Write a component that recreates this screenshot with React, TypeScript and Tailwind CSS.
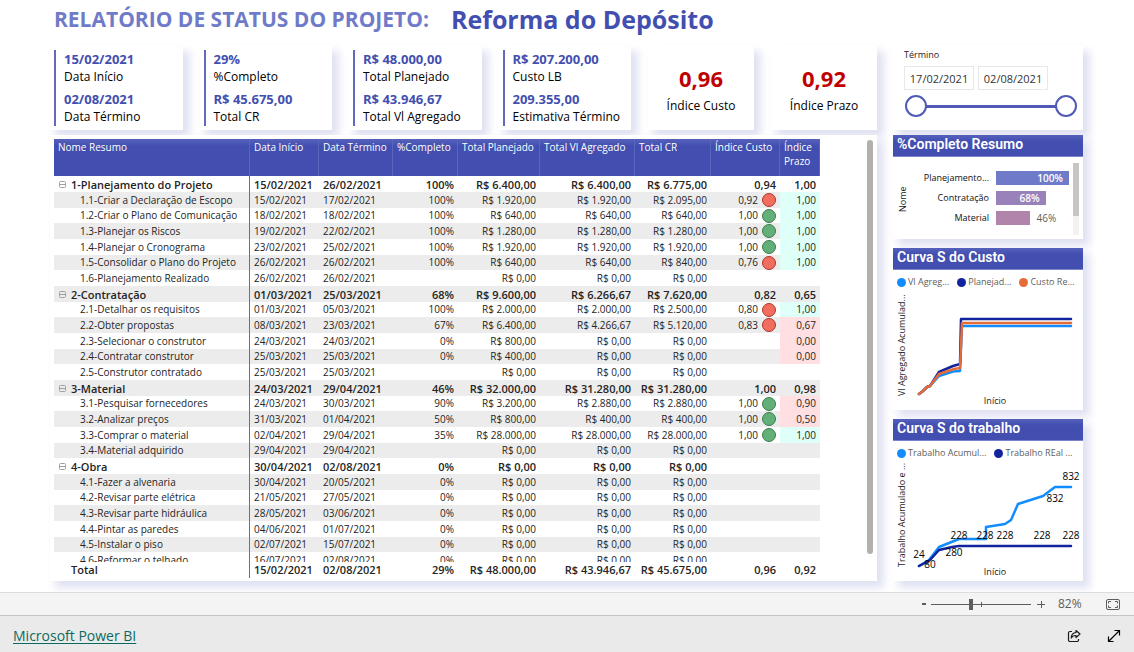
import React from 'react';
import clsx from 'clsx';

type Row = {
  name: string;
  group?: boolean;
  cells: string[];
  dot?: 'red' | 'green';
  tone?: 'good' | 'bad';
};

const columns = [
  { label: 'Nome Resumo', width: 'w-[196px]' },
  { label: 'Data Início', width: 'w-[69px]' },
  { label: 'Data Término', width: 'w-[74px]' },
  { label: '%Completo', width: 'w-[65px]' },
  { label: 'Total Planejado', width: 'w-[82px]' },
  { label: 'Total Vl Agregado', width: 'w-[95px]' },
  { label: 'Total CR', width: 'w-[76px]' },
  { label: 'Índice Custo', width: 'w-[69px]' },
  { label: 'Índice Prazo', width: 'w-[40px]' }
];

const rows: Row[] = [
  { name: '1-Planejamento do Projeto', group: true, cells: ['15/02/2021', '26/02/2021', '100%', 'R$ 6.400,00', 'R$ 6.400,00', 'R$ 6.775,00', '0,94', '1,00'] },
  { name: '1.1-Criar a Declaração de Escopo', cells: ['15/02/2021', '17/02/2021', '100%', 'R$ 1.920,00', 'R$ 1.920,00', 'R$ 2.095,00', '0,92', '1,00'], dot: 'red', tone: 'good' },
  { name: '1.2-Criar o Plano de Comunicação', cells: ['18/02/2021', '18/02/2021', '100%', 'R$ 640,00', 'R$ 640,00', 'R$ 640,00', '1,00', '1,00'], dot: 'green', tone: 'good' },
  { name: '1.3-Planejar os Riscos', cells: ['19/02/2021', '22/02/2021', '100%', 'R$ 1.280,00', 'R$ 1.280,00', 'R$ 1.280,00', '1,00', '1,00'], dot: 'green', tone: 'good' },
  { name: '1.4-Planejar o Cronograma', cells: ['23/02/2021', '25/02/2021', '100%', 'R$ 1.920,00', 'R$ 1.920,00', 'R$ 1.920,00', '1,00', '1,00'], dot: 'green', tone: 'good' },
  { name: '1.5-Consolidar o Plano do Projeto', cells: ['26/02/2021', '26/02/2021', '100%', 'R$ 640,00', 'R$ 640,00', 'R$ 840,00', '0,76', '1,00'], dot: 'red', tone: 'good' },
  { name: '1.6-Planejamento Realizado', cells: ['26/02/2021', '26/02/2021', '', 'R$ 0,00', 'R$ 0,00', 'R$ 0,00', '', ''] },
  { name: '2-Contratação', group: true, cells: ['01/03/2021', '25/03/2021', '68%', 'R$ 9.600,00', 'R$ 6.266,67', 'R$ 7.620,00', '0,82', '0,65'] },
  { name: '2.1-Detalhar os requisitos', cells: ['01/03/2021', '05/03/2021', '100%', 'R$ 2.000,00', 'R$ 2.000,00', 'R$ 2.500,00', '0,80', '1,00'], dot: 'red', tone: 'good' },
  { name: '2.2-Obter propostas', cells: ['08/03/2021', '23/03/2021', '67%', 'R$ 6.400,00', 'R$ 4.266,67', 'R$ 5.120,00', '0,83', '0,67'], dot: 'red', tone: 'bad' },
  { name: '2.3-Selecionar o construtor', cells: ['24/03/2021', '24/03/2021', '0%', 'R$ 800,00', 'R$ 0,00', 'R$ 0,00', '', '0,00'], tone: 'bad' },
  { name: '2.4-Contratar construtor', cells: ['25/03/2021', '25/03/2021', '0%', 'R$ 400,00', 'R$ 0,00', 'R$ 0,00', '', '0,00'], tone: 'bad' },
  { name: '2.5-Construtor contratado', cells: ['25/03/2021', '25/03/2021', '', 'R$ 0,00', 'R$ 0,00', 'R$ 0,00', '', ''] },
  { name: '3-Material', group: true, cells: ['24/03/2021', '29/04/2021', '46%', 'R$ 32.000,00', 'R$ 31.280,00', 'R$ 31.280,00', '1,00', '0,98'] },
  { name: '3.1-Pesquisar fornecedores', cells: ['24/03/2021', '30/03/2021', '90%', 'R$ 3.200,00', 'R$ 2.880,00', 'R$ 2.880,00', '1,00', '0,90'], dot: 'green', tone: 'bad' },
  { name: '3.2-Analizar preços', cells: ['31/03/2021', '01/04/2021', '50%', 'R$ 800,00', 'R$ 400,00', 'R$ 400,00', '1,00', '0,50'], dot: 'green', tone: 'bad' },
  { name: '3.3-Comprar o material', cells: ['02/04/2021', '29/04/2021', '35%', 'R$ 28.000,00', 'R$ 28.000,00', 'R$ 28.000,00', '1,00', '1,00'], dot: 'green', tone: 'good' },
  { name: '3.4-Material adquirido', cells: ['29/04/2021', '29/04/2021', '', 'R$ 0,00', 'R$ 0,00', 'R$ 0,00', '', ''] },
  { name: '4-Obra', group: true, cells: ['30/04/2021', '02/08/2021', '0%', 'R$ 0,00', 'R$ 0,00', 'R$ 0,00', '', ''] },
  { name: '4.1-Fazer a alvenaria', cells: ['30/04/2021', '20/05/2021', '0%', 'R$ 0,00', 'R$ 0,00', 'R$ 0,00', '', ''] },
  { name: '4.2-Revisar parte elétrica', cells: ['21/05/2021', '27/05/2021', '0%', 'R$ 0,00', 'R$ 0,00', 'R$ 0,00', '', ''] },
  { name: '4.3-Revisar parte hidráulica', cells: ['28/05/2021', '03/06/2021', '0%', 'R$ 0,00', 'R$ 0,00', 'R$ 0,00', '', ''] },
  { name: '4.4-Pintar as paredes', cells: ['04/06/2021', '01/07/2021', '0%', 'R$ 0,00', 'R$ 0,00', 'R$ 0,00', '', ''] },
  { name: '4.5-Instalar o piso', cells: ['02/07/2021', '15/07/2021', '0%', 'R$ 0,00', 'R$ 0,00', 'R$ 0,00', '', ''] },
  { name: '4.6-Reformar o telhado', cells: ['16/07/2021', '02/08/2021', '0%', 'R$ 0,00', 'R$ 0,00', 'R$ 0,00', '', ''] }
];

const total = ['15/02/2021', '02/08/2021', '29%', 'R$ 48.000,00', 'R$ 43.946,67', 'R$ 45.675,00', '0,96', '0,92'];

const cards = [
  [['15/02/2021', 'Data Início'], ['02/08/2021', 'Data Término']],
  [['29%', '%Completo'], ['R$ 45.675,00', 'Total CR']],
  [['R$ 48.000,00', 'Total Planejado'], ['R$ 43.946,67', 'Total Vl Agregado']],
  [['R$ 207.200,00', 'Custo LB'], ['209.355,00', 'Estimativa Término']]
];

const bars = [
  { name: 'Planejamento...', value: 100, color: 'bg-[#6f7bc8]' },
  { name: 'Contratação', value: 68, color: 'bg-[#9882b9]' },
  { name: 'Material', value: 46, color: 'bg-[#b185ab]' }
];

const workLabels = [
  { text: '24', x: 26, y: 95 },
  { text: '80', x: 37, y: 105 },
  { text: '280', x: 61, y: 93 },
  { text: '228', x: 66, y: 76 },
  { text: '228', x: 92, y: 76 },
  { text: '228', x: 112, y: 76 },
  { text: '228', x: 149, y: 76 },
  { text: '228', x: 178, y: 76 },
  { text: '832', x: 178, y: 17 },
  { text: '832', x: 162, y: 39 }
];

const cardShadow = 'bg-white shadow-[6px_6px_8px_1px_#e0e2f2]';

const InfoCard: React.FC<{ items: string[][] }> = ({ items }) => (
  <div className={clsx('min-w-0 p-1', cardShadow)}>
    <dl className="flex h-[76px] flex-col justify-between border-l-2 border-[#5f6bbd] pl-2">
      {items.map(([value, label]) => (
        <div key={label} className="flex flex-col whitespace-nowrap">
          <dd className="text-[13px] leading-[18px] font-bold text-[#424fb0]">{value}</dd>
          <dt className="order-last text-[12px] leading-[18px] text-black">{label}</dt>
        </div>
      ))}
    </dl>
  </div>
);

const IndexCard: React.FC<{ value: string; label: string }> = ({ value, label }) => (
  <div className={clsx('flex min-w-0 flex-col items-center justify-center pt-1 whitespace-nowrap', cardShadow)}>
    <p className="text-[22px] leading-8 font-bold text-[#c00000]">{value}</p>
    <p className="text-[12px] leading-6 text-black">{label}</p>
  </div>
);

const PanelTitle: React.FC<{ children: React.ReactNode }> = ({ children }) => (
  <h2 className="h-[22px] border-b border-[#7b85c9] bg-linear-to-b from-[#5561bb] to-[#424fb0] to-30% pl-1 font-[Roboto,sans-serif] text-[14px] leading-[18px] font-semibold text-white">
    {children}
  </h2>
);

const LegendItem: React.FC<{ color: string; label: string }> = ({ color, label }) => (
  <li className="flex items-center gap-[2px] whitespace-nowrap">
    <span className={clsx('size-[9px] rounded-full', color)} />
    {label}
  </li>
);

const CollapseIcon = () => (
  <svg viewBox="0 0 9 9" className="size-[9px] shrink-0" fill="none" stroke="#a0a0a0">
    <rect x="1.5" y="1.5" width="6" height="6" rx="1" />
    <path d="M1.5 4.5h6" />
  </svg>
);

const ColumnWidths = () => (
  <colgroup>
    {columns.map(col => (
      <col key={col.label} className={col.width} />
    ))}
  </colgroup>
);

const tableStyle = 'w-[766px] table-fixed border-separate border-spacing-0 text-[#252423]';

const StatusTable = () => (
  <section className={clsx('flex justify-between px-1 pt-1 pb-[3px]', cardShadow)}>
    <div>
      <div className="h-[423px] overflow-hidden">
        <table className={tableStyle}>
          <ColumnWidths />
          <thead>
            <tr className="h-[37px]">
              {columns.map(col => (
                <th
                  key={col.label}
                  scope="col"
                  className={clsx(
                    'border-r border-[#5966bd] bg-linear-to-b from-[#5561bb] to-[#424fb0] to-20% px-1 pt-[1px] text-left align-top text-[10px] leading-[14px] font-normal text-white',
                    col.label !== 'Índice Prazo' && 'whitespace-nowrap'
                  )}
                >
                  {col.label}
                </th>
              ))}
            </tr>
          </thead>
          <tbody className="[&>tr]:h-4 [&>tr:nth-child(3n)]:h-[15px] [&>tr:nth-child(even)]:bg-[#ececec]">
            {rows.map(row => (
              <tr key={row.name} className={clsx('leading-[15px] whitespace-nowrap', row.group ? 'text-[11px] font-semibold' : 'text-[10px]')}>
                <th
                  scope="row"
                  className={clsx(
                    'border-r border-[#5f6bbd] p-0 text-left',
                    row.group ? 'pl-1 font-semibold' : 'pl-[26px] font-normal'
                  )}
                >
                  {row.group ? (
                    <button type="button" className="flex items-center gap-1 leading-[15px]">
                      <CollapseIcon />
                      {row.name}
                    </button>
                  ) : (
                    row.name
                  )}
                </th>
                {row.cells.map((cell, i) => (
                  <td
                    key={i}
                    className={clsx(
                      'px-1 py-0',
                      i > 1 && 'text-right',
                      i === 7 && row.tone === 'good' && 'bg-[#dffff9]',
                      i === 7 && row.tone === 'bad' && 'bg-[#ffdfe1]'
                    )}
                  >
                    {i === 6 && row.dot ? (
                      <span className="flex h-[15px] items-center justify-end gap-1">
                        {cell}
                        <span
                          className={clsx(
                            'size-[14px] rounded-full border',
                            row.dot === 'red' ? 'border-[#a8362c] bg-[#f36d5f]' : 'border-[#3f7a50] bg-[#62b077]'
                          )}
                        />
                      </span>
                    ) : (
                      cell
                    )}
                  </td>
                ))}
              </tr>
            ))}
          </tbody>
        </table>
      </div>
      <table className={tableStyle}>
        <ColumnWidths />
        <tbody>
          <tr className="h-4 text-[11px] leading-4 font-semibold whitespace-nowrap">
            <th scope="row" className="border-r border-[#5f6bbd] p-0 pl-[17px] text-left font-semibold">Total</th>
            {total.map((cell, i) => (
              <td key={i} className={clsx('px-1 py-0', i > 1 && 'text-right')}>{cell}</td>
            ))}
          </tr>
        </tbody>
      </table>
    </div>
    <div className="mt-[1px] h-[414px] w-[6px] rounded-full bg-[#b3b0ad]" />
  </section>
);

const thumb =
  'pointer-events-none col-start-1 row-start-1 h-[22px] w-full appearance-none bg-transparent [&::-webkit-slider-thumb]:pointer-events-auto [&::-webkit-slider-thumb]:size-[22px] [&::-webkit-slider-thumb]:appearance-none [&::-webkit-slider-thumb]:rounded-full [&::-webkit-slider-thumb]:border-2 [&::-webkit-slider-thumb]:border-[#4f5bb5] [&::-webkit-slider-thumb]:bg-white';

const DateSlicer = () => (
  <section className={clsx('h-[84px] px-[11px] pt-[2px]', cardShadow)}>
    <h3 className="text-[9px] leading-[14px] text-[#252423]">Término</h3>
    <div className="mt-1 flex gap-1">
      <input aria-label="Data inicial" defaultValue="17/02/2021" className="h-6 w-[70px] border border-[#e8e8e8] text-center text-[11px] text-[#333]" />
      <input aria-label="Data final" defaultValue="02/08/2021" className="h-6 w-[70px] border border-[#e8e8e8] text-center text-[11px] text-[#333]" />
    </div>
    <div className="mt-[5px] ml-[1px] grid w-[172px] items-center">
      <div className="col-start-1 row-start-1 mx-3 h-[3px] bg-[#4f5bb5]" />
      <input type="range" aria-label="Início do período" defaultValue={0} className={thumb} />
      <input type="range" aria-label="Fim do período" defaultValue={100} className={thumb} />
    </div>
  </section>
);

const CompletionPanel = () => (
  <section className={clsx('mt-[5px]', cardShadow)}>
    <PanelTitle>%Completo Resumo</PanelTitle>
    <div className="flex h-[82px] pt-[6px] pr-1 pb-1 pl-1">
      <span className="w-3 rotate-180 text-center text-[9px] leading-3 text-[#252423] [writing-mode:vertical-rl]">Nome</span>
      <ul className="flex flex-1 flex-col gap-[6px] pt-2">
        {bars.map(bar => (
          <li key={bar.name} className="flex h-[14px] items-center gap-[7px] text-[10px] leading-[14px]">
            <span className="w-[80px] text-right text-[9px] whitespace-nowrap text-[#111]">{bar.name}</span>
            <span className="flex h-full w-[73px] items-center gap-[7px]">
              <span
                className={clsx('flex h-full shrink-0 items-center justify-end pr-[6px] font-semibold text-white', bar.color)}
                style={{ width: `${bar.value}%` }}
              >
                {bar.value > 50 && `${bar.value}%`}
              </span>
              {bar.value <= 50 && <span className="text-[#605e5c]">{bar.value}%</span>}
            </span>
          </li>
        ))}
      </ul>
      <div className="w-[6px] bg-[#f3f2f1]">
        <div className="h-[53px] bg-[#c8c6c4]" />
      </div>
    </div>
  </section>
);

const CostPanel = () => (
  <section className={clsx('mt-[9px]', cardShadow)}>
    <PanelTitle>Curva S do Custo</PanelTitle>
    <ul className="flex gap-2 pt-[5px] pl-1 text-[9px] leading-[14px] text-[#605e5c]">
      <LegendItem color="bg-[#118dff]" label="Vl Agreg..." />
      <LegendItem color="bg-[#12239e]" label="Planejad..." />
      <LegendItem color="bg-[#e66c37]" label="Custo Re..." />
    </ul>
    <svg viewBox="0 0 190 121" className="block h-[121px] w-full" fill="none" strokeWidth="2.5" strokeLinejoin="round" strokeLinecap="round">
      <polyline points="26,105 30,102 34,98 37,97 46,87 60,82.500 67,82 69,37 178,37" stroke="#118dff" />
      <polyline points="26,105 30,102 34,98 37,97 46,83 60,77 67,75 68,30 178,30" stroke="#12239e" />
      <polyline points="26,105 30,102 34,98 37,97 46,85 61,80 67,79 69,34 178,34" stroke="#e66c37" />
      <text transform="translate(12 107) rotate(-90)" fontSize="9" fill="#252423">Vl Agregado Acumulad...</text>
      <text x="102" y="115" fontSize="9" fill="#252423" textAnchor="middle">Início</text>
    </svg>
  </section>
);

const WorkPanel = () => (
  <section className={clsx('mt-[9px]', cardShadow)}>
    <PanelTitle>Curva S do trabalho</PanelTitle>
    <ul className="flex gap-2 pt-[5px] pl-1 text-[9px] leading-[14px] text-[#605e5c]">
      <LegendItem color="bg-[#118dff]" label="Trabalho Acumul..." />
      <LegendItem color="bg-[#12239e]" label="Trabalho REal ..." />
    </ul>
    <svg viewBox="0 0 190 121" className="block h-[121px] w-full" fill="none" strokeWidth="2.5" strokeLinejoin="round" strokeLinecap="round">
      <polyline points="26,106 36,100 46,87 66,79 93,79 93,67 112,64 118,60 125,44 150,36 162,27 178,27" stroke="#118dff" />
      <polyline points="26,106 32,103 37,100 46,90 59,87 66,86 178,86" stroke="#12239e" />
      {workLabels.map(label => (
        <text key={`${label.text}-${label.x}-${label.y}`} x={label.x} y={label.y + 3} fontSize="10" fill="#000" textAnchor="middle">
          {label.text}
        </text>
      ))}
      <text transform="translate(12 107) rotate(-90)" fontSize="9" fill="#252423">Trabalho Acumulado e ...</text>
      <text x="102" y="115" fontSize="9" fill="#252423" textAnchor="middle">Início</text>
    </svg>
  </section>
);

const ZoomBar = () => (
  <div className="flex h-6 items-center justify-end border-y border-t-[#dcdcdc] border-b-[#c4c4c4] bg-[#f4f4f4] pr-[14px] text-[12px] text-[#605e5c]">
    <button type="button" aria-label="Reduzir" className="w-[14px]">
      <svg viewBox="0 0 14 12" className="h-3 w-[14px]"><path d="M5 6h4" stroke="#605e5c" strokeWidth="2" /></svg>
    </button>
    <div className="grid w-[100px] items-center">
      <svg viewBox="0 0 100 12" className="col-start-1 row-start-1 h-3 w-full" stroke="#605e5c">
        <path d="M0 6.500h100M50.500 4v5" />
      </svg>
      <input
        type="range"
        aria-label="Zoom"
        min={0}
        max={100}
        defaultValue={40}
        className="col-start-1 row-start-1 h-[11px] w-full appearance-none bg-transparent [&::-webkit-slider-thumb]:h-[11px] [&::-webkit-slider-thumb]:w-1 [&::-webkit-slider-thumb]:appearance-none [&::-webkit-slider-thumb]:bg-[#605e5c]"
      />
    </div>
    <button type="button" aria-label="Ampliar" className="ml-[6px] w-[8px]">
      <svg viewBox="0 0 8 8" className="size-2" stroke="#605e5c"><path d="M0 4.500h8M4.500 1v7" /></svg>
    </button>
    <span className="ml-[13px] w-[23px]">82%</span>
    <button type="button" aria-label="Ajustar à página" className="ml-[25px]">
      <svg viewBox="0 0 14 11" className="h-[11px] w-[14px]" fill="none" stroke="#605e5c">
        <rect x=".5" y=".5" width="13" height="10" rx="1.500" />
        <path d="M5 2.500H2.500V4.500M9 2.500h2.500v2M5 8.500H2.500v-2M9 8.500h2.500v-2" />
      </svg>
    </button>
  </div>
);

const App: React.FC = () => {
  return (
    <div className="flex min-h-screen flex-col bg-white font-['Open_Sans','Noto_Sans',sans-serif]">
      <main className="flex-1 overflow-hidden pr-[51px] pb-[11px] pl-[50px]">
        <h1 className="flex h-[46px] items-center gap-[22px] pb-[6px] pl-1 font-bold whitespace-nowrap">
          <span className="text-[21px] text-[#6f7bc8]">RELATÓRIO DE STATUS DO PROJETO:</span>
          <span className="text-[25px] text-[#424fb0]">Reforma do Depósito</span>
        </h1>

        <div className="flex gap-4">
          <div className="flex min-w-0 flex-1 flex-col gap-[5px]">
            <div className="grid h-[84px] grid-cols-[5fr_5fr_5fr_5fr_4fr_4fr] gap-[17px]">
              {cards.map(items => (
                <InfoCard key={items[0][1]} items={items} />
              ))}
              <IndexCard value="0,96" label="Índice Custo" />
              <IndexCard value="0,92" label="Índice Prazo" />
            </div>
            <StatusTable />
          </div>

          <aside className="w-[190px] shrink-0">
            <DateSlicer />
            <CompletionPanel />
            <CostPanel />
            <WorkPanel />
          </aside>
        </div>
      </main>

      <ZoomBar />

      <footer className="flex h-9 items-center justify-between bg-[#eaeaea] px-[13px] pt-[3px]">
        <a href="#" className="text-[14px] font-medium text-[#0b6a5f] underline underline-offset-2">Microsoft Power BI</a>
        <div className="flex gap-[26px]">
          <button type="button" aria-label="Compartilhar">
            <svg viewBox="0 0 14 14" className="size-[14px]" fill="none" stroke="#1b1a19" strokeWidth="1.200" strokeLinejoin="round">
              <path d="M5 2.500H3A1.500 1.500 0 0 0 1.500 4v7A1.500 1.500 0 0 0 3 12.500h7a1.500 1.500 0 0 0 1.500-1.500v-1" />
              <path d="M9 1.500 13 5 9 8.500v-2C6.500 6.500 5.200 7.300 4.200 9 4.400 5.800 6 3.800 9 3.500z" />
            </svg>
          </button>
          <button type="button" aria-label="Tela cheia">
            <svg viewBox="0 0 14 14" className="size-[14px]" fill="none" stroke="#000" strokeWidth="1.200">
              <path d="M1.500 12.500l11-11M7.500 1.500h5v5M1.500 7.500v5h5" />
            </svg>
          </button>
        </div>
      </footer>
    </div>
  );
};

export default App;
